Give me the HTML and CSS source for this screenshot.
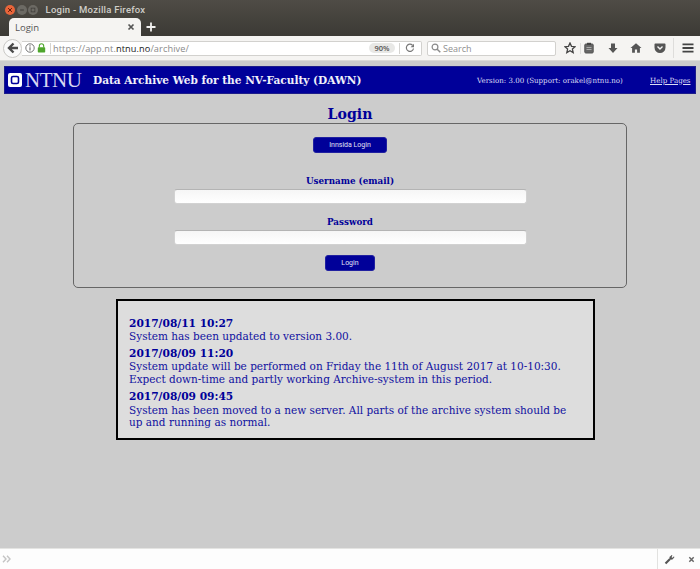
FILE: index.html
```html
<!DOCTYPE html>
<html lang="en">
<head>
<meta charset="utf-8">
<title>Login</title>
<link rel="stylesheet" href="styles.css">
</head>
<body>
<div class="browser">
  <header class="chrome">
    <div class="titlebar">
      <span class="wbtn close"><svg viewBox="0 0 8 8" width="6" height="6"><path d="M1.500 1.500l5 5M6.500 1.500l-5 5" stroke="#5a1a08" stroke-width="1.300"/></svg></span>
      <span class="wbtn"><svg viewBox="0 0 8 8" width="6" height="6"><path d="M1.500 4h5" stroke="#3c3b37" stroke-width="1.300"/></svg></span>
      <span class="wbtn"><svg viewBox="0 0 8 8" width="6" height="6"><rect x="1.500" y="1.500" width="5" height="5" fill="none" stroke="#3c3b37"/></svg></span>
      <span class="wintitle">Login - Mozilla Firefox</span>
    </div>
    <div class="tabstrip">
      <div class="tab"><span>Login</span><svg class="tabx" viewBox="0 0 8 8" width="8" height="8"><path d="M1.500 1.500l5 5M6.500 1.500l-5 5" stroke="#555" stroke-width="1.700"/></svg></div>
      <svg class="newtab" viewBox="0 0 10 10" width="10" height="10"><path d="M5 .5v9M.5 5h9" stroke="#f2f1f0" stroke-width="1.800"/></svg>
    </div>
    <div class="navbar">
      <span class="back"><svg viewBox="0 0 12 12" width="12" height="12"><path d="M6.500 1.500L2 6l4.500 4.500M2.500 6H11" fill="none" stroke="#4a4a4a" stroke-width="2.400"/></svg></span>
      <div class="urlbar">
        <svg class="info" viewBox="0 0 10 10" width="10" height="10"><circle cx="5" cy="5" r="4.200" fill="none" stroke="#666" stroke-width=".9"/><path d="M5 4.300v3.200M5 2.300v1.100" stroke="#666" stroke-width="1.100"/></svg>
        <svg class="lock" viewBox="0 0 9 10" width="9" height="10"><path d="M2.300 4.500V3a2.200 2.200 0 0 1 4.400 0v1.500" fill="none" stroke="#4fa62d" stroke-width="1.100"/><rect x=".8" y="4.300" width="7.400" height="5.200" rx=".7" fill="#4fa62d"/></svg>
        <span class="sep"></span>
        <span class="url">https://app.nt.<b>ntnu.no</b>/archive/</span>
        <span class="zoomlevel">90%</span>
        <span class="sep sep-r"></span>
        <svg class="reload" viewBox="0 0 10 10" width="10" height="10"><path d="M8.500 5.500A3.600 3.600 0 1 1 7.500 2.200" fill="none" stroke="#777" stroke-width="1.200"/><path d="M9 .8v3.400H5.600z" fill="#777"/></svg>
      </div>
      <div class="searchbar">
        <svg viewBox="0 0 10 10" width="10" height="10"><circle cx="4" cy="4" r="2.900" fill="none" stroke="#8a8a8a" stroke-width="1.200"/><path d="M6.200 6.200L9.300 9.300" stroke="#8a8a8a" stroke-width="1.500"/></svg>
        <span>Search</span>
      </div>
      <div class="tools">
        <svg class="t-star" viewBox="0 0 12 12" width="12" height="12"><path d="M6 1l1.500 3.300 3.600.4-2.700 2.400.8 3.500L6 8.800 2.800 10.600l.8-3.500L.9 4.700l3.600-.4z" fill="none" stroke="#444" stroke-width="1.300"/></svg>
        <span class="toolsep"></span>
        <svg class="t-clip" viewBox="0 0 10 12" width="10" height="12"><rect x=".8" y="2" width="8.400" height="9" rx="1" fill="#666" stroke="#555"/><rect x="3" y=".8" width="4" height="2.200" fill="#444"/><path d="M2.500 5.500h5M2.500 7.500h5" stroke="#bbb" stroke-width=".8"/></svg>
        <svg class="t-down" viewBox="0 0 10 11" width="10" height="11"><path d="M3 .5h4v4.500h2.500L5 10 .5 5H3z" fill="#555"/></svg>
        <svg class="t-home" viewBox="0 0 12 10" width="12" height="10"><path d="M6 .3L.5 5h1.600v4.700h2.800V6.500h2.200v3.200h2.800V5h1.600z" fill="#555"/></svg>
        <svg class="t-pocket" viewBox="0 0 12 10" width="12" height="10"><path d="M1.300.5h9.400c.5 0 .8.300.8.800V4.500A5.500 5.500 0 0 1 .5 4.500V1.300c0-.5.300-.8.800-.8z" fill="#555"/><path d="M3.500 3.500L6 6l2.500-2.500" fill="none" stroke="#f5f5f5" stroke-width="1.400"/></svg>
        <span class="toolsep toolsep-wide"></span>
        <svg class="t-menu" viewBox="0 0 12 10" width="12" height="10"><path d="M.5 1.300h11M.5 5h11M.5 8.700h11" stroke="#444" stroke-width="1.800"/></svg>
      </div>
    </div>
  </header>

  <main class="page">
    <div class="banner">
      <div class="logo">
        <svg viewBox="0 0 14 14" width="14" height="14"><rect width="14" height="14" rx="2" fill="#fff"/><rect x="3.500" y="3.500" width="7" height="7" rx="1.500" fill="none" stroke="#000099" stroke-width="1.600"/></svg>
        <span class="logotext">NTNU</span>
      </div>
      <div class="apptitle">Data Archive Web for the NV-Faculty (DAWN)</div>
      <div class="version">Version: 3.00 (Support: orakel@ntnu.no)</div>
      <a class="help" href="#">Help Pages</a>
    </div>

    <h1 class="heading">Login</h1>

    <form class="loginbox">
      <button class="btn btn-innsida" type="button">Innsida Login</button>
      <label class="fieldlabel label-user">Username (email)</label>
      <input class="field field-user" type="text">
      <label class="fieldlabel label-pass">Password</label>
      <input class="field field-pass" type="password">
      <button class="btn btn-login" type="button">Login</button>
    </form>

    <section class="news">
      <article class="item">
        <h2>2017/08/11 10:27</h2>
        <p>System has been updated to version 3.00.</p>
      </article>
      <article class="item">
        <h2>2017/08/09 11:20</h2>
        <p>System update will be performed on Friday the 11th of August 2017 at 10-10:30.<br>Expect down-time and partly working Archive-system in this period.</p>
      </article>
      <article class="item">
        <h2>2017/08/09 09:45</h2>
        <p>System has been moved to a new server. All parts of the archive system should be up and running as normal.</p>
      </article>
    </section>
  </main>

  <footer class="addonbar">
    <svg class="chev" viewBox="0 0 10 8" width="10" height="8"><path d="M1 .8L4 4 1 7.200M5 .8L8 4 5 7.200" fill="none" stroke="#c4c4c4" stroke-width="1.400"/></svg>
    <span class="addonsep"></span>
    <svg class="wrench" viewBox="0 0 11 11" width="11" height="11"><path d="M1.500 9.500L6 5" stroke="#555" stroke-width="2.200"/><path d="M6 5A2.500 2.500 0 0 1 8 1.500L7 3.500 8.500 4 10 2.800A2.800 2.800 0 0 1 6 5z" fill="#555" stroke="#555" stroke-width=".7"/></svg>
    <svg class="addonx" viewBox="0 0 8 8" width="7" height="7"><path d="M1.500 1.500l5 5M6.500 1.500l-5 5" stroke="#666" stroke-width="1.700"/></svg>
  </footer>
</div>
</body>
</html>
```

FILE: styles.css
```css
* { box-sizing: border-box; }
html, body { margin: 0; padding: 0; height: 100%; overflow: hidden; }
.browser { width: 700px; height: 569px; display: flex; flex-direction: column; font-family: "Open Sans", "Noto Sans", sans-serif; }

.chrome { flex: none; }
.titlebar { height: 18px; background: linear-gradient(#4f4c46, #45433d); display: flex; align-items: center; padding: 1px 0 0 5px; gap: 1.500px; }
.wbtn { width: 10px; height: 10px; border-radius: 50%; background: #6c6a64; display: flex; align-items: center; justify-content: center; }
.wbtn.close { background: #e9653a; }
.wintitle { margin-left: 6px; color: #d0cec8; font-family: Roboto, "Open Sans", sans-serif; font-size: 9.500px; font-weight: 500; letter-spacing: .25px; }
.tabstrip { height: 18px; background: linear-gradient(#45433d, #3c3a35); display: flex; align-items: flex-end; padding-left: 9px; }
.tab { width: 132px; height: 18px; background: #f5f4f2; border-radius: 5px 5px 0 0; display: flex; align-items: center; justify-content: space-between; padding: 0 4px 0 6px; color: #555; font-size: 9.500px; }
.tabx { flex: none; margin-right: 2px; }
.newtab { margin: 0 0 4px 5px; }

.navbar { height: 25px; background: #f5f4f2; border-bottom: 1px solid #dcdbd8; display: flex; align-items: center; padding-left: 3px; }
.back { width: 19px; height: 19px; border: 1px solid #c9c8c5; border-radius: 50%; background: #fafafa; display: flex; align-items: center; justify-content: center; flex: none; }
.urlbar { width: 400px; height: 15px; margin-left: 0; background: #fff; border: 1px solid #d2d1ce; border-left: 0; border-radius: 0 2px 2px 0; display: flex; align-items: center; padding-left: 3px; flex: none; }
.info { flex: none; }
.lock { flex: none; margin-left: 2px; }
.sep { width: 1px; height: 11px; background: #d4d3d0; margin-left: 4px; flex: none; }
.url { margin-left: 2px; font-size: 9.200px; color: #8a8a8a; white-space: nowrap; letter-spacing: .1px; flex: 1; }
.url b { font-weight: 400; color: #222; }
.zoomlevel { width: 26px; height: 10px; border-radius: 5px; background: #e8e8e6; color: #555; font-size: 7.500px; font-weight: 600; display: flex; align-items: center; justify-content: center; margin-right: 4px; flex: none; }
.sep-r { margin: 0 5px 0 0; }
.reload { flex: none; margin-right: 6px; }
.searchbar { width: 129px; height: 15px; margin-left: 5px; background: #fff; border: 1px solid #d2d1ce; border-radius: 2px; display: flex; align-items: center; padding-left: 3px; gap: 2px; color: #8f8f8f; font-size: 9px; flex: none; }
.tools { flex: 1; display: flex; align-items: center; height: 100%; }
.t-star { margin-left: 8px; }
.toolsep { width: 1px; height: 11px; background: #dedddb; margin-left: 4px; }
.t-clip { margin-left: 3px; }
.t-down { margin-left: 14px; }
.t-home { margin-left: 12px; }
.t-pocket { margin-left: 12px; }
.toolsep-wide { height: 20px; margin-left: 7px; }
.t-menu { margin-left: 8px; }

.page { flex: 1; background: #cccccc; padding: 5px 4px 0; font-family: "DejaVu Serif", serif; display: flex; flex-direction: column; align-items: center; min-height: 0; }
.banner { width: 692px; height: 28px; background: #000099; border: 1px solid #1c1c8a; display: flex; align-items: center; color: #fff; padding-left: 3px; flex: none; }
.logo { display: flex; align-items: center; width: 85px; flex: none; }
.logotext { margin-left: 3px; font-family: "Liberation Serif", serif; font-size: 21px; letter-spacing: -.5px; color: #d8d8f2; line-height: 1; }
.apptitle { font-size: 10.550px; font-weight: 700; color: #f0f0fa; white-space: nowrap; width: 384px; flex: none; }
.version { font-size: 7.080px; color: #dcdcf4; white-space: nowrap; width: 173px; flex: none; }
.help { font-size: 7.100px; color: #dcdcf4; white-space: nowrap; }

.heading { margin: 11px 0 0; height: 18px; font-size: 14.100px; line-height: 18px; font-weight: 700; color: #000099; }
.loginbox { width: 554px; height: 165px; border: 1px solid #666; border-radius: 5px; display: flex; flex-direction: column; align-items: center; padding-top: 13px; flex: none; }
.btn { background: #000099; border: 1px solid #2020a0; border-radius: 3px; color: #e0e0f4; font-family: Roboto, "Liberation Sans", sans-serif; font-size: 7px; height: 16px; padding: 0; display: block; }
.btn-innsida { width: 74px; }
.btn-login { width: 50px; margin-top: 10px; }
.fieldlabel { display: block; font-size: 8.750px; line-height: 12px; font-weight: 700; color: #000099; height: 12px; }
.label-user { margin-top: 22px; }
.label-pass { margin-top: 12px; }
.field { display: block; width: 353px; height: 15px; border: 1px solid #d2d2d2; border-top-color: #b4b4b4; border-radius: 3px; background: linear-gradient(#f6f6f6, #fff); padding: 0; }
.field-user { margin-top: 2px; }
.field-pass { margin-top: 2px; }

.news { width: 479px; height: 141px; margin: 11px 0 0 11px; border: 2px solid #000; background: #dddddd; color: #000099; padding: 16.800px 25px 0 11px; flex: none; }
.item { margin-bottom: 5.500px; }
.item h2 { margin: 0; font-size: 10.650px; line-height: 12.200px; font-weight: 700; }
.item p { margin: 0; font-size: 10.500px; line-height: 12.700px; color: #1010a0; }

.addonbar { flex: none; height: 21px; background: #fdfdfd; border-top: 1px solid #e4e4e2; display: flex; align-items: center; padding-left: 2px; }
.chev { flex: none; }
.addonsep { width: 1px; height: 20px; background: #e2e2e0; margin-left: 645px; }
.wrench { margin-left: 6px; }
.addonx { margin-left: 13px; }
```
